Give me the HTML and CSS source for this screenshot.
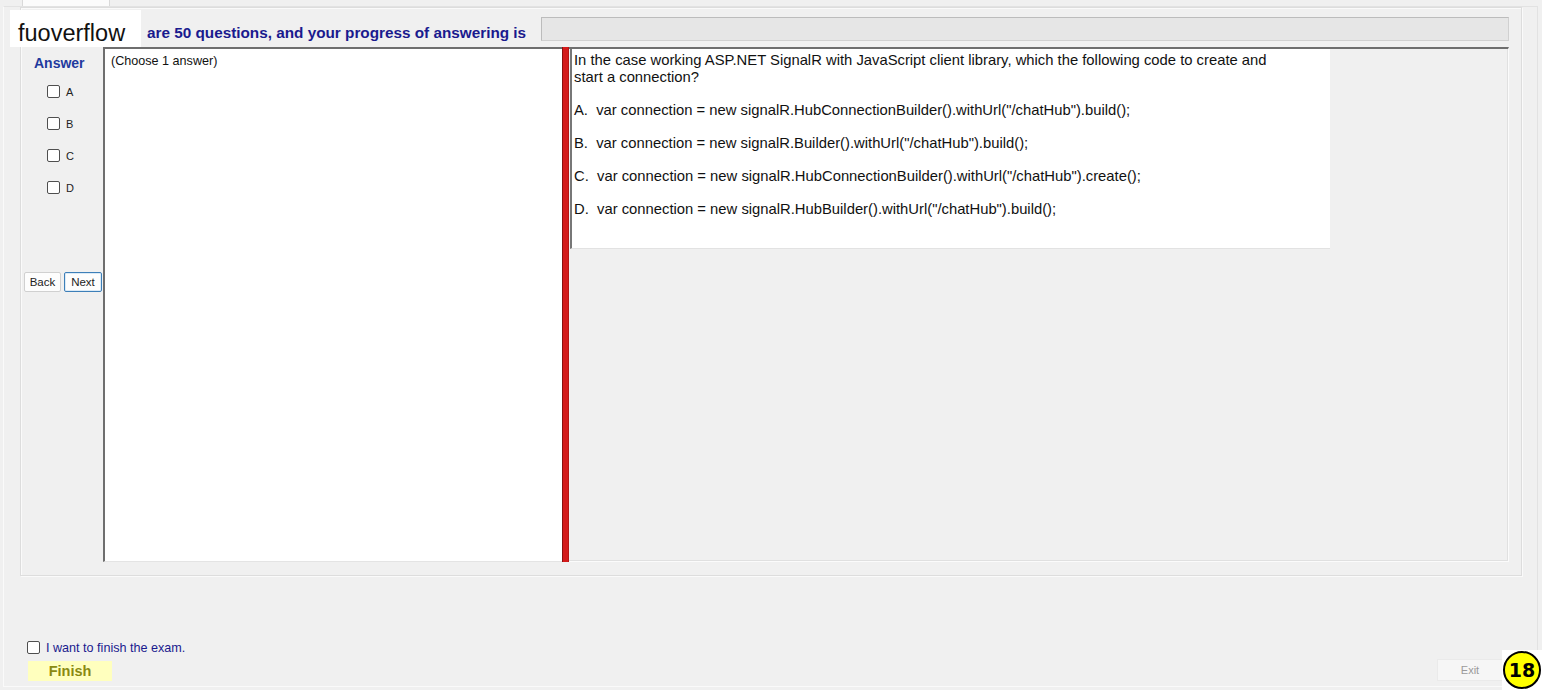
FILE: index.html
```html
<!DOCTYPE html>
<html>
<head>
<meta charset="utf-8">
<link rel="stylesheet" href="styles.css">
</head>
<body>
<div class="tabs"><div class="tab"></div></div>
<div class="window">
  <div class="group">
    <div class="header">
      <div class="progress-text">are 50 questions, and your progress of answering is</div>
      <div class="progress-bar"></div>
    </div>
    <div class="main">
      <div class="answer-col">
        <div class="answer-title">Answer</div>
        <label class="opt"><span class="cb"></span><span>A</span></label>
        <label class="opt"><span class="cb"></span><span>B</span></label>
        <label class="opt"><span class="cb"></span><span>C</span></label>
        <label class="opt"><span class="cb"></span><span>D</span></label>
        <div class="nav">
          <button class="btn">Back</button>
          <button class="btn focused">Next</button>
        </div>
      </div>
      <div class="choose-box">(Choose 1 answer)</div>
      <div class="splitter"></div>
      <div class="right-panel">
        <div class="question">In the case working ASP.NET SignalR with JavaScript client library, which the following code to create and<br>start a connection?<br><br>A.&nbsp; var connection = new signalR.HubConnectionBuilder().withUrl("/chatHub").build();<br><br>B.&nbsp; var connection = new signalR.Builder().withUrl("/chatHub").build();<br><br>C.&nbsp; var connection = new signalR.HubConnectionBuilder().withUrl("/chatHub").create();<br><br>D.&nbsp; var connection = new signalR.HubBuilder().withUrl("/chatHub").build();</div>
      </div>
    </div>
  </div>
  <div class="footer">
    <div class="footer-left">
      <label class="finish-check"><span class="cb"></span><span>I want to finish the exam.</span></label>
      <button class="finish-btn">Finish</button>
    </div>
    <button class="exit-btn">Exit</button>
  </div>
</div>
<div class="watermark">fuoverflow</div>
<div class="badge-wrap"><div class="badge">18</div></div>
</body>
</html>
```
FILE: styles.css
```css
html, body {
  margin: 0;
  padding: 0;
}
body {
  width: 1542px;
  height: 690px;
  overflow: hidden;
  background: #f0f0f0;
  font-family: "Liberation Sans", Arial, sans-serif;
  position: relative;
}
.tabs {
  height: 6px;
  padding-left: 22px;
  display: flex;
}
.tab {
  width: 86px;
  height: 6px;
  background: #fbfbfb;
  border-left: 1px solid #d9d9d9;
  border-right: 1px solid #d9d9d9;
}
.window {
  margin-left: 3px;
  width: 1535px;
  height: 681px;
  box-sizing: border-box;
  border: 1px solid #e2e2e2;
  border-bottom-color: #fafafa;
  border-left-color: #fafafa;
  display: flex;
  flex-direction: column;
}
.group {
  margin-left: 16px;
  width: 1502px;
  height: 569px;
  box-sizing: border-box;
  border: 1px solid #dddddd;
  box-shadow: inset 1px 1px 0 #fafafa, 1px 1px 0 #fafafa;
  padding: 9px 12px 13px 1px;
  display: flex;
  flex-direction: column;
}
.header {
  height: 24px;
  display: flex;
  align-items: flex-start;
}
.progress-text {
  width: 394px;
  padding-left: 125px;
  padding-top: 8px;
  box-sizing: content-box;
  font-size: 15.3px;
  font-weight: bold;
  color: #1a1a8e;
  line-height: 15px;
  white-space: nowrap;
}
.progress-bar {
  width: 968px;
  height: 24px;
  box-sizing: border-box;
  background: #e6e6e6;
  border: 1px solid #bcbcbc;
  border-right-color: #d0d0d0;
  border-bottom-color: #d0d0d0;
}
.main {
  margin-top: 6px;
  height: 515px;
  display: flex;
}
.answer-col {
  width: 81px;
  display: flex;
  flex-direction: column;
  padding-top: 8px;
  box-sizing: border-box;
}
.answer-title {
  font-size: 14px;
  font-weight: bold;
  color: #1f3a9e;
  padding-left: 12px;
  height: 17px;
  line-height: 17px;
  margin-bottom: 13px;
}
.opt {
  display: flex;
  align-items: center;
  height: 13px;
  margin-bottom: 19px;
  padding-left: 25px;
  font-size: 11px;
  color: #222;
}
.cb {
  width: 11px;
  height: 11px;
  border: 1px solid #4f4f4f;
  border-radius: 2px;
  background: #fff;
  margin-right: 6px;
  flex: none;
}
.nav {
  margin-top: 59px;
  display: flex;
  gap: 3px;
  padding-left: 2px;
}
.btn {
  width: 37px;
  height: 20px;
  padding: 0;
  font-family: "Liberation Sans", Arial, sans-serif;
  font-size: 11.5px;
  color: #222;
  background: #fdfdfd;
  border: 1px solid #d0d0d0;
  border-radius: 2px;
}
.btn.focused {
  width: 38px;
  border: 1px solid #3d7fb8;
  box-shadow: inset 0 0 0 1px #dbeaf6;
}
.choose-box {
  width: 459px;
  box-sizing: border-box;
  background: #fff;
  border-left: 2px solid #6e6e6e;
  border-top: 2px solid #6e6e6e;
  border-bottom: 1px solid #e4e4e4;
  padding: 5px 6px;
  font-size: 12.6px;
  color: #111;
}
.splitter {
  width: 7px;
  box-sizing: border-box;
  background: #d41b1b;
  border-left: 1px solid #8a1010;
  border-right: 1px solid #b81515;
}
.right-panel {
  width: 940px;
  box-sizing: border-box;
  border-top: 2px solid #6e6e6e;
  border-right: 1px solid #fbfbfb;
  border-bottom: 1px solid #fbfbfb;
  box-shadow: inset -1px -1px 0 #e0e0e0;
  padding-left: 1px;
}
.question {
  width: 760px;
  height: 200px;
  box-sizing: border-box;
  background: #fff;
  border-left: 2px solid #777;
  border-bottom: 1px solid #e2e2e2;
  padding: 3px 2px 0 2px;
  font-size: 14.8px;
  line-height: 16.5px;
  color: #111;
}
.footer {
  flex: 1;
  display: flex;
  justify-content: space-between;
  align-items: flex-end;
  padding: 0 34px 5px 23px;
}
.footer-left {
  display: flex;
  flex-direction: column;
}
.finish-check {
  display: flex;
  align-items: center;
  font-size: 12.6px;
  color: #1a1a8e;
  height: 15px;
  margin-bottom: 6px;
}
.finish-check .cb {
  margin-right: 6px;
}
.finish-btn {
  margin-left: 1px;
  width: 84px;
  height: 20px;
  padding: 0;
  border: none;
  background: #ffffbe;
  font-family: "Liberation Sans", Arial, sans-serif;
  font-size: 14.5px;
  font-weight: bold;
  color: #8a8a12;
}
.exit-btn {
  width: 66px;
  height: 22px;
  padding: 0;
  border: 1px solid #eaeaea;
  background: #f6f6f6;
  font-family: "Liberation Sans", Arial, sans-serif;
  font-size: 11px;
  color: #9a9a9a;
}
.watermark {
  position: absolute;
  left: 10px;
  top: 10px;
  width: 131px;
  height: 37px;
  box-sizing: border-box;
  background: #fff;
  padding-left: 8px;
  padding-top: 3px;
  font-size: 23.5px;
  line-height: 40px;
  color: #111;
  overflow: hidden;
}
.badge-wrap {
  position: absolute;
  left: 1502px;
  top: 650px;
  width: 40px;
  height: 40px;
  background: #fff;
  display: flex;
  align-items: center;
  justify-content: center;
}
.badge {
  width: 34px;
  height: 34px;
  border: 2px solid #000;
  border-radius: 50%;
  background: #ffff00;
  display: flex;
  align-items: center;
  justify-content: center;
  font-family: "DejaVu Sans", sans-serif;
  font-weight: bold;
  font-size: 19px;
  color: #000;
}
```
